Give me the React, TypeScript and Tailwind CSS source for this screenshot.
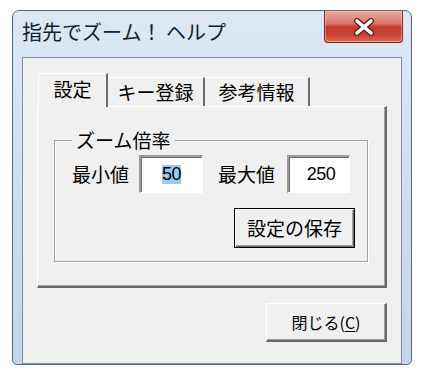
import * as React from 'react';

const FONT = "font-['Noto_Sans_CJK_JP','Noto_Sans',sans-serif]";

function CloseGlyph() {
  return (
    <svg width="24" height="18" viewBox="0 0 24 18" aria-hidden="true">
      <path d="M5 3 L19 15 M19 3 L5 15" stroke="#5a1d16" strokeWidth="6" strokeLinecap="round" />
      <path d="M5 3 L19 15 M19 3 L5 15" stroke="#ffffff" strokeWidth="3.6" strokeLinecap="round" />
    </svg>
  );
}

export default function App(): React.ReactElement {
  return (
    <div className={`h-[375px] w-[426px] bg-white pl-[12px] pt-[10px] text-black ${FONT}`}>
      <div className="flex h-[355px] w-[400px] flex-col rounded-t-[7px] rounded-b-[5px] border border-[#5d6a7a] bg-[linear-gradient(to_bottom,#dde8f4_0%,#d2e0ef_40%,#c4d6ea_100%)]">
        {/* title bar */}
        <div className="flex h-[46px] items-start justify-between">
          <span className="pl-[9px] pt-[9px] text-[20px] leading-[24px] text-[#16202c]">
            指先でズーム！ ヘルプ
          </span>
          <button className="mr-[8px] flex h-[32px] w-[79px] items-center justify-center rounded-b-[4px] border border-t-0 border-[#7a2a22] bg-[linear-gradient(to_bottom,#e9aa9c_0%,#d9786a_40%,#c2382b_52%,#c84132_75%,#e0694f_100%)] shadow-[inset_0_0_0_1px_rgba(255,220,210,0.45)]">
            <CloseGlyph />
          </button>
        </div>

        {/* client area */}
        <div className="mx-[9px] flex flex-1 flex-col border border-[#7f90a4] bg-[#f0f0f0] px-[14px] pt-[15px] pb-[12px]">
          {/* tabs */}
          <div className="flex h-[33px] items-end">
            <div className="relative z-10 -mb-px ml-px flex h-[34px] w-[70px] items-center justify-center rounded-tl-[3px] border-l border-t border-r-2 border-l-white border-t-white border-r-[#6b6b6b] bg-[#f0f0f0] pb-[4px] text-[19px] leading-[20px]">
              設定
            </div>
            <div className="flex h-[29px] w-[97px] items-center justify-center border-t border-r-2 border-t-white border-r-[#6b6b6b] text-[19px] leading-[20px]">
              キー登録
            </div>
            <div className="flex h-[29px] w-[105px] items-center justify-center border-t border-r-2 border-t-white border-r-[#6b6b6b] text-[19px] leading-[20px]">
              参考情報
            </div>
          </div>

          {/* tab panel */}
          <div className="h-[182px] w-[350px] border-l border-t border-r-2 border-b-2 border-l-white border-t-white border-r-[#696969] border-b-[#696969] pl-[16px] pt-[26px] shadow-[inset_-1px_-1px_0_#a0a0a0]">
            <fieldset className="w-[312px] border border-[#a0a0a0] px-[17px] pb-[13px] shadow-[inset_1px_1px_0_#fff,1px_1px_0_#fff]">
              <legend className="bg-[#f0f0f0] px-[4px] text-[19px] leading-[14px]">ズーム倍率</legend>
              <div className="flex items-center pt-[8px]">
                <span className="w-[67px] text-[19px] leading-[24px]">最小値</span>
                <div className="flex h-[38px] w-[64px] items-center justify-center border-t-2 border-l-2 border-b border-r border-t-[#9b9b9b] border-l-[#9b9b9b] border-b-white border-r-white bg-white shadow-[inset_1px_1px_0_#6f6f6f]">
                  <span className="bg-[#99c8f0] font-['Liberation_Sans',sans-serif] text-[18px] leading-[19px] tracking-[-0.5px]">50</span>
                </div>
                <span className="ml-[15px] w-[69px] text-[19px] leading-[24px]">最大値</span>
                <div className="flex h-[38px] w-[63px] items-center justify-center border-t-2 border-l-2 border-b border-r border-t-[#9b9b9b] border-l-[#9b9b9b] border-b-white border-r-white bg-white pl-[4px] shadow-[inset_1px_1px_0_#6f6f6f]">
                  <span className="font-['Liberation_Sans',sans-serif] text-[18px] leading-[19px] tracking-[-0.5px]">250</span>
                </div>
              </div>
              <div className="mt-[15px] flex justify-end">
                <button className="-mr-[5px] flex h-[40px] w-[121px] items-center justify-center border border-black bg-[#f0f0f0] text-[19px] leading-[22px] shadow-[inset_1px_1px_0_#fff,inset_-1px_-1px_0_#696969,inset_-2px_-2px_0_#a0a0a0]">
                  設定の保存
                </button>
              </div>
            </fieldset>
          </div>

          {/* footer */}
          <div className="mt-[15px] flex justify-end">
            <button className="flex h-[39px] w-[121px] items-center justify-center border-l border-t border-r-2 border-b-2 border-l-white border-t-white border-r-[#696969] border-b-[#696969] bg-[#f0f0f0] text-[16px] leading-[20px] shadow-[inset_-1px_-1px_0_#a0a0a0]">
              閉じる(<span className="underline underline-offset-2">C</span>)
            </button>
          </div>
        </div>
      </div>
    </div>
  );
}
